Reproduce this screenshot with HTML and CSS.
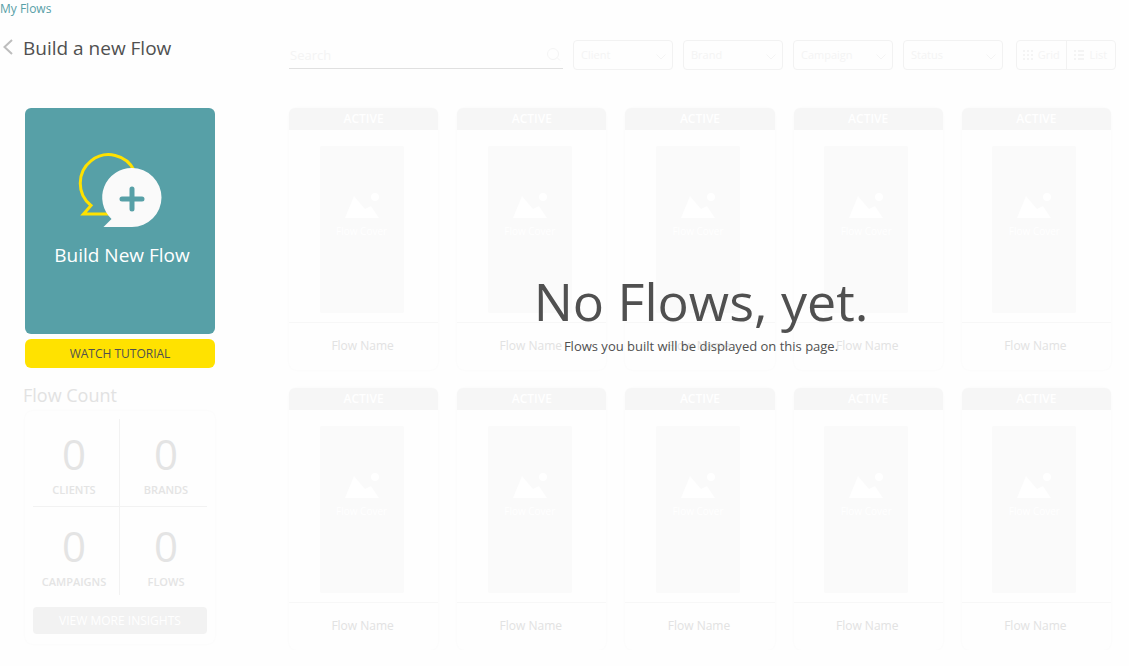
FILE: index.html
```html
<!DOCTYPE html>
<html lang="en">
<head>
<meta charset="utf-8">
<meta name="viewport" content="width=device-width, initial-scale=1">
<title>My Flows</title>
<link rel="stylesheet" href="styles.css">
</head>
<body>
<svg class="defs" aria-hidden="true">
  <symbol id="chevron" viewBox="0 0 10 6"><path d="M.5 .5 5 5 9.500 .5" fill="none" stroke="currentColor"/></symbol>
  <symbol id="picture" viewBox="0 0 34 26"><path d="M0 25 9 3l11 13 6-3 8 12z" fill="currentColor"/><circle cx="30" cy="4" r="4" fill="currentColor"/></symbol>
</svg>
<nav class="crumbs"><a href="#">My Flows</a></nav>
<div class="page">
  <aside class="side">
    <header class="title">
      <button class="back" type="button" aria-label="Back"><svg viewBox="0 0 10 16"><path d="M9 1 1.500 8 9 15" fill="none" stroke="currentColor" stroke-width="2"/></svg></button>
      <h1>Build a new Flow</h1>
    </header>
    <button class="build" type="button">
      <svg class="bubbles" viewBox="0 0 84 76">
        <path d="M31 61H5.500L13 52.500A28.500 28.500 0 1 1 56.500 18" fill="none" stroke="#ffe200" stroke-width="3"/>
        <path d="M54 15a29.500 29.500 0 0 1 0 59H25.500l8-8A29.500 29.500 0 0 1 54 15z" fill="#fafafa"/>
        <path d="M54 36v20M44 46h20" stroke="#57a0a7" stroke-width="5" stroke-linecap="round"/>
      </svg>
      <span>Build New Flow</span>
    </button>
    <button class="tutorial" type="button">WATCH TUTORIAL</button>
    <h2>Flow Count</h2>
    <section class="counts">
      <dl class="stats">
        <div class="stat"><dd>0</dd><dt>CLIENTS</dt></div>
        <div class="stat"><dd>0</dd><dt>BRANDS</dt></div>
        <div class="stat"><dd>0</dd><dt>CAMPAIGNS</dt></div>
        <div class="stat"><dd>0</dd><dt>FLOWS</dt></div>
      </dl>
      <button class="insights" type="button">VIEW MORE INSIGHTS</button>
    </section>
  </aside>
  <main class="main">
    <div class="toolbar">
      <div class="search">
        <input type="search" placeholder="Search" aria-label="Search">
        <svg viewBox="0 0 14 13"><circle cx="6" cy="6" r="5.500" fill="none" stroke="currentColor"/><path d="m10 9.500 3 3" stroke="currentColor"/></svg>
      </div>
      <div class="pick"><select aria-label="Client"><option>Client</option></select><svg><use href="#chevron"/></svg></div>
      <div class="pick"><select aria-label="Brand"><option>Brand</option></select><svg><use href="#chevron"/></svg></div>
      <div class="pick"><select aria-label="Campaign"><option>Campaign</option></select><svg><use href="#chevron"/></svg></div>
      <div class="pick"><select aria-label="Status"><option>Status</option></select><svg><use href="#chevron"/></svg></div>
      <div class="views">
        <button type="button"><svg viewBox="0 0 10 10"><path d="M0 1h2m2 0h2m2 0h2M0 5h2m2 0h2m2 0h2M0 9h2m2 0h2m2 0h2" stroke="currentColor" stroke-width="2"/></svg>Grid</button>
        <button type="button"><svg viewBox="0 0 10 10"><path d="M0 1h2m2 0h6M0 5h2m2 0h6M0 9h2m2 0h6" stroke="currentColor" stroke-width="2"/></svg>List</button>
      </div>
    </div>
    <div class="board">
      <div class="grid" id="grid"></div>
      <div class="empty">
        <p class="empty-title">No Flows, yet.</p>
        <p class="empty-text">Flows you built will be displayed on this page.</p>
      </div>
    </div>
  </main>
</div>
<script src="cards.js"></script>
</body>
</html>
```
FILE: cards.js
```js
const card = `
  <article class="card">
    <div class="card-status">ACTIVE</div>
    <div class="card-body">
      <div class="cover"><svg><use href="#picture"/></svg><span>Flow Cover</span></div>
    </div>
    <div class="card-name">Flow Name</div>
  </article>`;
document.getElementById("grid").innerHTML = card.repeat(10);
```
FILE: styles.css
```css
* { box-sizing: border-box; }
body {
  margin: 0;
  background: #fefefe;
  color: #505050;
  font: 12px/18px "Segoe UI", "Open Sans", sans-serif;
}
h1, h2, p, dl, dd { margin: 0; font-weight: 400; }
button, input, select { font: inherit; color: inherit; border: 0; padding: 0; background: none; }
svg { display: block; }
.defs { position: absolute; width: 0; height: 0; }

.crumbs a { color: #57a0a7; text-decoration: none; }
.page { display: flex; gap: 74px; padding-top: 16px; padding-right: 13px; }

.side { flex: none; width: 215px; padding-left: 25px; display: flex; flex-direction: column; }
.title { display: flex; align-items: center; gap: 10px; height: 28px; margin: 0 0 46px -22px; }
.title h1 { font-size: 19px; line-height: 28px; white-space: nowrap; }
.back { width: 10px; color: #bdbdbd; }
.back svg { width: 10px; height: 16px; margin-top: -3px; }
.build {
  height: 226px;
  border-radius: 6px;
  background: #57a0a7;
  color: #fff;
  font-size: 19px;
  line-height: 28px;
  display: flex;
  flex-direction: column;
  align-items: center;
  justify-content: flex-start;
  padding-top: 45px;
  gap: 12px;
}
.build span { padding-left: 4px; }
.bubbles { width: 84px; height: 76px; }
.tutorial { height: 29px; margin-top: 5px; border-radius: 6px; background: #ffe200; }
.side h2 { margin: 13px 0 2px -2px; color: #e2e2e2; font-size: 18px; line-height: 28px; }
.counts { padding: 8px 8px 10px; border-radius: 8px; box-shadow: 0 0 3px #f8f8f8; }
.stats { display: grid; grid-template-columns: 87px 1fr; grid-template-rows: 88px 88px; margin-bottom: 12px; text-align: center; color: #e4e4e4; }
.stat { display: flex; flex-direction: column; padding-top: 9px; }
.stat:nth-child(odd) { padding-right: 4px; border-right: 1px solid #f2f2f2; }
.stat:nth-child(even) { padding-left: 5px; }
.stat:nth-child(-n+2) { border-bottom: 1px solid #f2f2f2; }
.stat:nth-child(n+3) { padding-top: 13px; }
.stat dd { font-size: 42px; line-height: 52px; }
.stat dt { font-size: 11px; line-height: 20px; font-weight: 600; }
.insights { display: block; width: 100%; height: 27px; border-radius: 4px; background: #f2f2f2; color: #fff; }

.main { flex: 1; min-width: 0; }
.toolbar { display: flex; align-items: center; gap: 10px; margin: 6px 0 38px; color: #f4f4f4; }
.search { flex: 1; min-width: 0; display: flex; align-items: center; height: 28px; padding-right: 2px; border-bottom: 1px solid #e0e0e0; }
.search input { flex: 1; min-width: 0; padding-left: 1px; font-size: 13px; outline: 0; }
.search input::placeholder { color: #f4f4f4; opacity: 1; }
.search svg { width: 14px; height: 13px; }
.pick { position: relative; width: 100px; }
.pick select { appearance: none; width: 100%; height: 30px; padding-left: 7px; border: 1px solid #f2f2f2; border-radius: 4px; font-size: 11px; }
.pick svg { position: absolute; right: 7px; top: 14px; width: 10px; height: 6px; pointer-events: none; }
.views { display: flex; width: 100px; height: 30px; margin-left: 3px; border: 1px solid #f2f2f2; border-radius: 4px; }
.views button { flex: 1 1 0; display: flex; align-items: center; justify-content: center; gap: 5px; font-size: 11px; }
.views button + button { border-left: 1px solid #f2f2f2; }
.views svg { width: 10px; height: 10px; }

.board { position: relative; margin-right: 5px; }
.grid { display: grid; grid-template-columns: repeat(5, 1fr); gap: 18px 19px; }
.card { border-radius: 8px; box-shadow: 0 0 3px #f8f8f8; }
.card-status { height: 22px; border-radius: 6px 6px 0 0; background: #f6f6f6; color: #fff; line-height: 22px; font-weight: 600; text-align: center; }
.card-body { display: flex; justify-content: center; padding: 16px 4px 9px 0; border-bottom: 1px solid #f7f7f7; }
.cover { width: 84px; height: 167px; border-radius: 2px; background: #fafafa; color: #fff; display: flex; flex-direction: column; align-items: center; padding-top: 47px; font-size: 10px; line-height: 16px; }
.cover svg { width: 34px; height: 26px; margin-bottom: 4px; }
.card-name { padding: 14px 2px 15px 0; color: #e2e2e2; text-align: center; }
.empty { position: absolute; top: 157px; left: 0; right: 0; padding-left: 2px; text-align: center; }
.empty-title { font-size: 52px; line-height: 72px; }
.empty-text { font-size: 13px; line-height: 18px; }
```
